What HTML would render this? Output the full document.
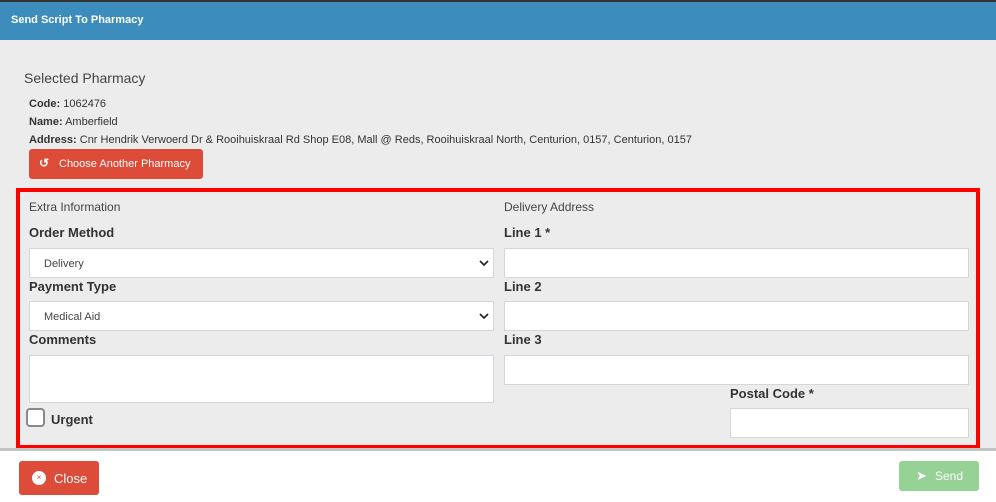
<!DOCTYPE html>
<html><head><style>
*{box-sizing:border-box;margin:0;padding:0}
body{width:996px;height:502px;overflow:hidden;background:#fff;font-family:"Liberation Sans",Arial,sans-serif;position:relative;color:#333}
.a{position:absolute}
.hdr{left:0;top:0;width:996px;height:40px;background:#3c8dbc;border-top:2px solid #333}
.hdr span{position:absolute;left:11px;top:12px;color:#fff;font-weight:bold;font-size:11px}
.body{left:0;top:40px;width:996px;height:408px;background:#ececec}
.lbl{font-size:13px;font-weight:bold;color:#333}
.inp{background:#fff;border:1px solid #d2d6de}
.sel{font-size:11px;color:#444;padding:9px 0 0 14px}
.sm{font-size:11px;color:#333}
</style></head><body>
<div class="a hdr"><span>Send Script To Pharmacy</span></div>
<div class="a body"></div>
<div class="a" style="left:24px;top:70px;font-size:14px;color:#444">Selected Pharmacy</div>
<div class="a sm" style="left:29px;top:98px"><b>Code:</b> 1062476</div>
<div class="a sm" style="left:29px;top:116px"><b>Name:</b> Amberfield</div>
<div class="a sm" style="left:29px;top:134px"><b>Address:</b> Cnr Hendrik Verwoerd Dr &amp; Rooihuiskraal Rd Shop E08, Mall @ Reds, Rooihuiskraal North, Centurion, 0157, Centurion, 0157</div>
<div class="a" style="left:29px;top:149px;width:174px;height:30px;background:#dd4b39;border-radius:3px;color:#fff;font-size:11px;padding:9px 0 0 30px">Choose Another Pharmacy</div>
<div class="a" style="left:39px;top:156px;color:#fff;font-size:12px;font-weight:bold">↺</div>
<div class="a" style="left:16px;top:188px;width:964px;height:261px;border:4px solid #f00"></div>
<div class="a" style="left:29px;top:200px;font-size:12px;color:#444">Extra Information</div>
<div class="a" style="left:504px;top:200px;font-size:12px;color:#444">Delivery Address</div>
<div class="a lbl" style="left:29px;top:225px">Order Method</div>
<div class="a inp sel" style="left:29px;top:248px;width:465px;height:30px">Delivery</div>
<svg class="a" style="left:479px;top:259px" width="10" height="8"><path d="M1 2l4 4 4-4" stroke="#222" stroke-width="1.6" fill="none"/></svg>
<div class="a lbl" style="left:29px;top:279px">Payment Type</div>
<div class="a inp sel" style="left:29px;top:301px;width:465px;height:30px">Medical Aid</div>
<svg class="a" style="left:479px;top:312px" width="10" height="8"><path d="M1 2l4 4 4-4" stroke="#222" stroke-width="1.6" fill="none"/></svg>
<div class="a lbl" style="left:29px;top:332px">Comments</div>
<div class="a inp" style="left:29px;top:355px;width:465px;height:48px"></div>
<div class="a" style="left:26px;top:408px;width:19px;height:19px;border:2px solid #888;border-radius:4px;background:#fff"></div>
<div class="a lbl" style="left:51px;top:412px">Urgent</div>
<div class="a lbl" style="left:504px;top:225px">Line 1 *</div>
<div class="a inp" style="left:504px;top:248px;width:465px;height:30px"></div>
<div class="a lbl" style="left:504px;top:279px">Line 2</div>
<div class="a inp" style="left:504px;top:301px;width:465px;height:30px"></div>
<div class="a lbl" style="left:504px;top:332px">Line 3</div>
<div class="a inp" style="left:504px;top:355px;width:465px;height:30px"></div>
<div class="a lbl" style="left:730px;top:386px">Postal Code *</div>
<div class="a inp" style="left:730px;top:408px;width:239px;height:30px"></div>
<div class="a" style="left:0;top:448px;width:996px;height:3px;background:#c4c4c4"></div>
<div class="a" style="left:19px;top:461px;width:80px;height:34px;background:#dd4b39;border-radius:3px;color:#fff;font-size:13px;padding:10px 0 0 35px">Close</div>
<div class="a" style="left:32px;top:471px;width:14px;height:14px;border-radius:50%;background:#fff;color:#dd4b39;font-size:8px;text-align:center;line-height:14px">×</div>
<div class="a" style="left:899px;top:461px;width:80px;height:30px;background:#96d196;border-radius:3px;color:#fff;font-size:12px;padding:8px 0 0 36px">Send</div>
<div class="a" style="left:916px;top:468px;color:#fff;font-size:13px">➤</div>
</body></html>
